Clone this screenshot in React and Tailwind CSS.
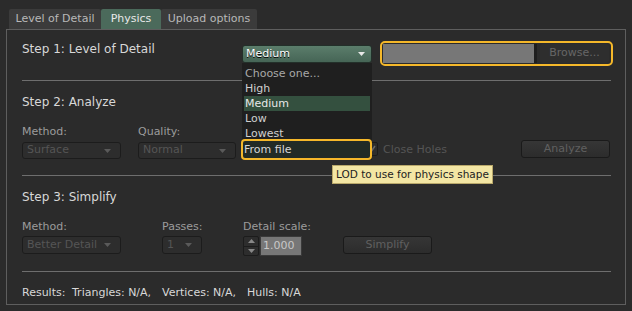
import React from 'react';

const Arrow = ({ color = '#5a5a5a' }) => (
    <svg width="7" height="4" viewBox="0 0 7 4" className="shrink-0">
        <path d="M0 0 H7 L3.5 4 Z" fill={color} />
    </svg>
);

const Combo = ({ label, className = '' }) => (
    <div className={`flex items-center justify-between h-[17px] pl-[4px] pr-[9px] rounded-[3px] border border-[#1c1c1c] bg-[#2d2d2d] text-[11px] text-[#555] ${className}`}>
        <span>{label}</span>
        <Arrow />
    </div>
);

const Btn = ({ label, className = '' }) => (
    <div className={`flex items-center justify-center h-[18px] rounded-[3px] border border-[#1a1a1a] bg-gradient-to-b from-[#363636] to-[#2c2c2c] text-[11px] text-[#606060] ${className}`}>
        {label}
    </div>
);

const Separator = ({ className = '' }) => <div className={`h-px w-[589px] bg-[#6e6e6e] ${className}`} />;

const Title = ({ children, className = '' }) => (
    <div className={`text-[12px] leading-[14px] text-[#d8d8d8] ${className}`}>{children}</div>
);

const Label = ({ children, className = '' }) => (
    <div className={`text-[11px] leading-[13px] text-[#9c9c9c] ${className}`}>{children}</div>
);

const tabs = ['Level of Detail', 'Physics', 'Upload options'];
const lodItems = ['Choose one...', 'High', 'Medium', 'Low', 'Lowest'];

export default function App() {
    return (
        <div className="relative w-[632px] h-[311px] overflow-hidden bg-[#2b2b2b] font-['DejaVu_Sans',sans-serif]">
            {/* tabs */}
            <div className="flex pl-[9px] pt-[9px]">
                {tabs.map((t) => (
                    <div
                        key={t}
                        className={`h-[20px] flex items-center justify-center rounded-t-[2px] text-[11px] ${
                            t === 'Physics'
                                ? 'w-[60px] bg-[#4b6a5b] text-[#e8e8e8]'
                                : t === 'Level of Detail'
                                ? 'w-[92px] bg-[#3b3b3b] text-[#b8b8b8]'
                                : 'w-[96px] bg-[#3b3b3b] text-[#b8b8b8]'
                        }`}
                    >
                        {t}
                    </div>
                ))}
            </div>

            {/* panel */}
            <div className="ml-[6px] w-[620px] h-[276px] border border-[#5e5e5e] pl-[15px]">
                <div className="flex mt-[11px] h-[25px]">
                    <Title className="w-[220px] pt-[1px]">Step 1: Level of Detail</Title>
                    <div className="mt-[4px] w-[130px] h-[18px] flex items-center justify-between pl-[3px] pr-[6px] rounded-[3px] border border-[#23302a] bg-gradient-to-b from-[#5b7d6b] to-[#466556] text-[11px] text-white [text-shadow:0_1px_0_#000]">
                        <span>Medium</span>
                        <Arrow color="#e8e8e8" />
                    </div>
                    <div className="ml-[8px] w-[233px] h-[25px] rounded-[5px] border-2 border-[#f5b82a] flex items-center pl-[1px] pr-[2px] gap-[3px]">
                        <div className="w-[154px] h-[19px] bg-[#777777] border-r-[3px] border-[#1e1e1e]" />
                        <div className="flex-1 h-[19px] rounded-[2px] bg-[#2e2e2e] flex items-center justify-center text-[11px] text-[#666]">
                            Browse...
                        </div>
                    </div>
                </div>

                <Separator className="mt-[14px]" />

                <Title className="mt-[14px]">Step 2: Analyze</Title>
                <div className="flex mt-[16px]">
                    <Label className="w-[116px]">Method:</Label>
                    <Label>Quality:</Label>
                </div>
                <div className="flex mt-[2px] h-[18px]">
                    <Combo label="Surface" className="w-[99px] mt-[2px]" />
                    <Combo label="Normal" className="w-[98px] ml-[17px] mt-[2px]" />
                    <div className="ml-[128px] mt-[2px] w-[14px] h-[14px] rounded-[2px] border border-[#1c1c1c] bg-[#2d2d2d] flex items-center justify-center">
                        <svg width="9" height="9" viewBox="0 0 9 9">
                            <path d="M1 5 L3.5 7.5 L8 1" stroke="#6a6a6a" strokeWidth="1.5" fill="none" />
                        </svg>
                    </div>
                    <div className="ml-[5px] mt-[3px] text-[11px] leading-[14px] text-[#555]">Close Holes</div>
                    <Btn label="Analyze" className="ml-[74px] w-[89px]" />
                </div>

                <Separator className="mt-[17px]" />

                <Title className="mt-[14px]">Step 3: Simplify</Title>
                <div className="flex mt-[16px]">
                    <Label className="w-[140px]">Method:</Label>
                    <Label className="w-[81px]">Passes:</Label>
                    <Label>Detail scale:</Label>
                </div>
                <div className="flex mt-[3px] h-[20px]">
                    <Combo label="Better Detail" className="w-[99px] h-[18px]" />
                    <Combo label="1" className="w-[40px] h-[18px] ml-[41px] pr-[7px]" />
                    <div className="ml-[41px] w-[16px] h-[20px] flex flex-col rounded-[2px] border border-[#1c1c1c] bg-[#2d2d2d]">
                        <div className="flex-1 flex items-center justify-center border-b border-[#1c1c1c]">
                            <svg width="7" height="4" viewBox="0 0 7 4"><path d="M0 4 H7 L3.5 0 Z" fill="#888" /></svg>
                        </div>
                        <div className="flex-1 flex items-center justify-center">
                            <Arrow color="#888" />
                        </div>
                    </div>
                    <div className="ml-px w-[42px] h-[20px] bg-[#777777] border border-[#3a3a3a] flex items-center pl-[2px] text-[11px] text-[#c8c8c8]">
                        1.000
                    </div>
                    <Btn label="Simplify" className="ml-[41px] w-[89px]" />
                </div>

                <Separator className="mt-[15px]" />

                <div className="flex mt-[14px] text-[11px] leading-[13px] text-[#d8d8d8]">
                    <span className="w-[50px]">Results:</span>
                    <span className="w-[90px]">Triangles: N/A,</span>
                    <span className="w-[85px]">Vertices: N/A,</span>
                    <span>Hulls: N/A</span>
                </div>
            </div>

            {/* open dropdown list */}
            <div className="absolute left-[242px] top-[63px] w-[130px] h-[97px] bg-[#1f1f1f] pt-[3px] px-[2px] text-[11px] leading-[15px]">
                {lodItems.map((item) => (
                    <div
                        key={item}
                        className={`h-[15px] pl-[1px] ${
                            item === 'Medium'
                                ? 'bg-[#34503f] text-[#e8e8e8]'
                                : item === 'Choose one...'
                                ? 'text-[#a8a8a8]'
                                : 'text-[#cfcfcf]'
                        }`}
                    >
                        {item}
                    </div>
                ))}
            </div>
            <div className="absolute left-[241px] top-[139px] w-[131px] h-[21px] rounded-[4px] border-2 border-[#f5b82a] bg-[#222b26] pl-[1px] text-[11px] leading-[17px] text-[#d8d8d8]">
                From file
            </div>

            {/* tooltip */}
            <div className="absolute left-[332px] top-[165px] w-[161px] h-[19px] bg-[#f3e6a4] border border-[#b9a86a] pl-[3px] text-[10.5px] leading-[17px] text-[#222] whitespace-nowrap">
                LOD to use for physics shape
            </div>
        </div>
    );
}
